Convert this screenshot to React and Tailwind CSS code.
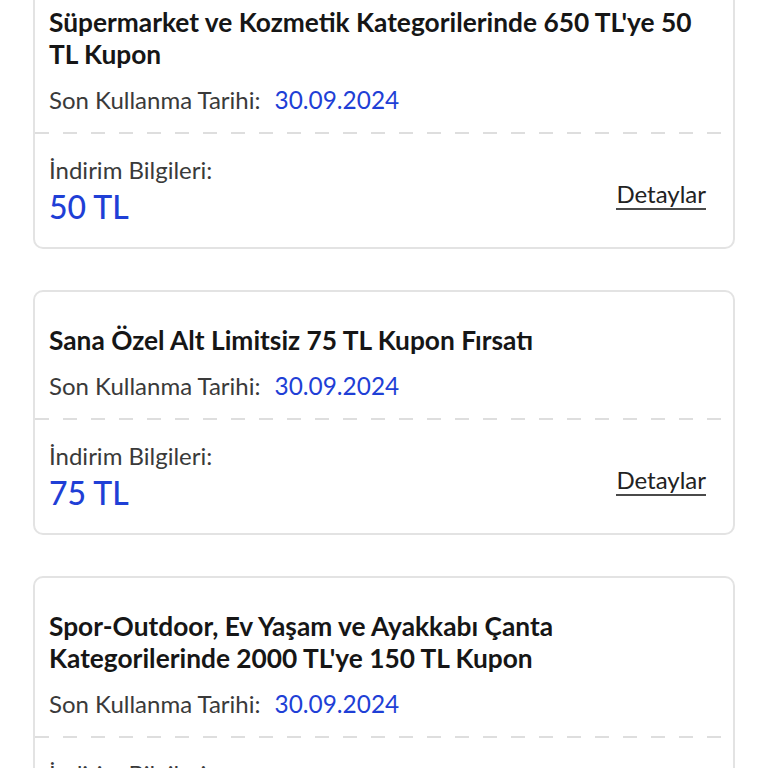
const coupons = [
  {
    id: 1,
    title: "Süpermarket ve Kozmetik Kategorilerinde 650 TL'ye 50 TL Kupon",
    date: '30.09.2024',
    amount: '50 TL',
  },
  {
    id: 2,
    title: 'Sana Özel Alt Limitsiz 75 TL Kupon Fırsatı',
    date: '30.09.2024',
    amount: '75 TL',
  },
  {
    id: 3,
    title: "Spor-Outdoor, Ev Yaşam ve Ayakkabı Çanta Kategorilerinde 2000 TL'ye 150 TL Kupon",
    date: '30.09.2024',
    amount: '150 TL',
  },
]

function CouponCard({ coupon }) {
  return (
    <div className="rounded-[10px] border-2 border-[#e3e3e3] bg-white">
      <div className="pl-[14px] pr-[27px] pt-[32px] pb-[16px]">
        <h3 className="text-[26.3px] font-bold leading-[32px] text-[#161616]">
          {coupon.title}
        </h3>
        <p className="mt-[14px] text-[24px] leading-[32px] text-[#3a3a3a]">
          Son Kullanma Tarihi:
          <span className="ml-[14px] text-[24.4px] text-[#1f3fd6]">{coupon.date}</span>
        </p>
      </div>
      <div className="h-[2px] bg-[linear-gradient(to_right,#dedede_14px,transparent_14px)] bg-[length:28px_2px]" />
      <div className="flex items-end justify-between pl-[14px] pr-[27px] pt-[20px] pb-[23px]">
        <div>
          <p className="text-[24px] leading-[32px] text-[#3a3a3a]">İndirim Bilgileri:</p>
          <p className="mt-[4px] text-[32px] font-medium leading-[34px] text-[#1f3fd6]">
            {coupon.amount}
          </p>
        </div>
        <button
          type="button"
          className="mb-[14px] border-b-2 border-[#4a4a4a] pb-[1px] text-[24px] leading-[26px] text-[#222]"
        >
          Detaylar
        </button>
      </div>
    </div>
  )
}

export default function App() {
  return (
    <div className="h-screen overflow-hidden bg-white font-['Lato',sans-serif]">
      <div className="mx-[33px] mt-[-28px] flex flex-col gap-[41px]">
        {coupons.map((c) => (
          <CouponCard key={c.id} coupon={c} />
        ))}
      </div>
    </div>
  )
}
